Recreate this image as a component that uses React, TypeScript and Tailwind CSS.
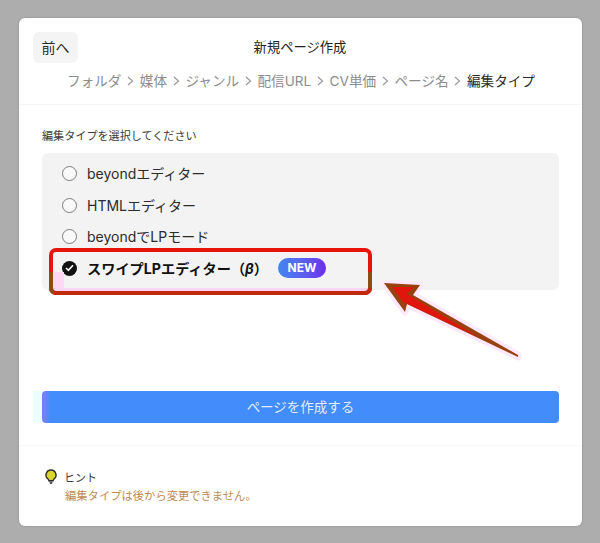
const fontStack = 'Inter, "Noto Sans CJK JP", sans-serif';

const steps = ["フォルダ", "媒体", "ジャンル", "配信URL", "CV単価", "ページ名"];

const Radio = ({ label }: { label: string }) => (
  <div className="flex h-[31.5px] items-center gap-[10px] pl-5">
    <span className="h-[15px] w-[15px] rounded-full border-[1.5px] border-[#7d7d7d] bg-[#f9f9f9]" />
    <span className="text-[14px] text-[#2c2c2c]">{label}</span>
  </div>
);

const Bulb = () => (
  <svg width="14" height="16" viewBox="0 0 14 16" className="-mt-[2px]">
    <path d="M7 1a5 5 0 0 0-3 9c.6.5.8 1 .9 1.7h4.2c.1-.7.3-1.2.9-1.7A5 5 0 0 0 7 1z" fill="#dcd52c" stroke="#2b2b2b" strokeWidth="1.4" />
    <path d="M5.3 12.6h3.4L8 15H6z" fill="#555" />
  </svg>
);

const Annotation = () => (
  <svg className="absolute left-0 top-0" width="600" height="543" viewBox="0 0 600 543" fill="none">
    <rect x="53" y="272" width="11" height="17" fill="#ffd8f5" />
    <rect x="53" y="288" width="315" height="3" fill="#fcd4f3" />
    <rect x="33" y="391" width="9" height="32" fill="#ecffff" />
    <rect x="51" y="250" width="319" height="43" rx="5" stroke="#e8140c" strokeWidth="4" />
    <path d="M51 272V288a5 5 0 0 0 3 4.6" stroke="#8c4c12" strokeWidth="4" />
    <path d="M54 293H365a5 5 0 0 0 5-5" stroke="#c2280c" strokeWidth="4" />
    <path d="M370 272V288" stroke="#8c4c12" strokeWidth="4" />
    <polygon points="384,283 420,285 413,295 518,355 518,357 407,304 405,312" stroke="#ffe8fb" strokeWidth="7" strokeLinejoin="round" />
    <polygon points="384,283 420,285 413,295 518,355 518,357 407,304 405,312" fill="#96420f" />
    <polygon points="392,287 414,287 407,294 480,338 403,302" fill="#e0160c" />
  </svg>
);

export default function App() {
  return (
    <div className="relative h-[543px] w-[600px] overflow-hidden bg-[#adadad] pl-[19px] pt-[18px]" style={{ fontFamily: fontStack }}>
      <div className="flex h-[508px] w-[563px] flex-col rounded-md bg-white shadow-[0_0_3px_rgba(0,0,0,0.15)]">
        <div className="h-[87px] border-b border-[#f6f6f6] px-[14px] pt-[14px]">
          <div className="relative flex h-[31px] items-center justify-center">
            <button className="absolute left-0 top-0 h-[31px] w-[45px] rounded-md bg-[#f4f4f4] text-[14px] text-[#2a2a2a]">前へ</button>
            <span className="ml-[-1px] text-[13.3px] text-[#222]">新規ページ作成</span>
          </div>
          <div className="mt-[8px] flex items-center justify-center gap-[5.7px] pl-[1px] text-[13.6px] leading-[20px] text-[#8c8c8c]">
            {steps.map((s) => (
              <span key={s} className="flex items-center gap-[5.7px]">
                {s}
                <svg width="7" height="10" viewBox="0 0 7 10" fill="none">
                  <path d="M1 1l4.5 4L1 9" stroke="#9a9a9a" strokeWidth="1.2" />
                </svg>
              </span>
            ))}
            <span className="text-[#2a2a2a]">編集タイプ</span>
          </div>
        </div>

        <div className="flex h-[341px] flex-col border-b border-[#f8f8f8] px-[23px]">
          <p className="mt-[23px] text-[11.1px] leading-[16px] text-[#3a3a3a]">編集タイプを選択してください</p>
          <div className="mt-[9px] flex h-[137px] flex-col rounded-md bg-[#f3f3f3] pt-[5px]">
            <Radio label="beyondエディター" />
            <Radio label="HTMLエディター" />
            <Radio label="beyondでLPモード" />
            <div className="flex h-[31.5px] items-center gap-[10px] pl-5">
              <span className="flex h-[15px] w-[15px] items-center justify-center rounded-full bg-[#111]">
                <svg width="9" height="8" viewBox="0 0 9 8" fill="none">
                  <path d="M1 4l2.4 2.4L8 1.2" stroke="white" strokeWidth="1.6" />
                </svg>
              </span>
              <span className="w-[181px] text-[14.2px] font-bold text-[#111]">
                スワイプLPエディター（<i>β</i>）
              </span>
              <span className="flex h-[20px] w-[48px] items-center justify-center rounded-full bg-gradient-to-r from-[#3f86f0] to-[#6a2bec] text-[12px] font-bold text-white">NEW</span>
            </div>
          </div>
          <button className="mt-[101px] h-[32px] w-full rounded-[4px] bg-gradient-to-r from-[#7680f5] from-[2px] to-[#428cfb] to-[8px] text-[13.5px] text-[#e1ecff]">ページを作成する</button>
        </div>

        <div className="px-[25px] pt-[23px]">
          <div className="flex items-center gap-[6px] text-[11px] leading-[18px] text-[#333]">
            <Bulb />
            <span>ヒント</span>
          </div>
          <p className="pl-[21px] text-[11.3px] leading-[18px] text-[#c08a52]">編集タイプは後から変更できません。</p>
        </div>
      </div>
      <Annotation />
    </div>
  );
}
